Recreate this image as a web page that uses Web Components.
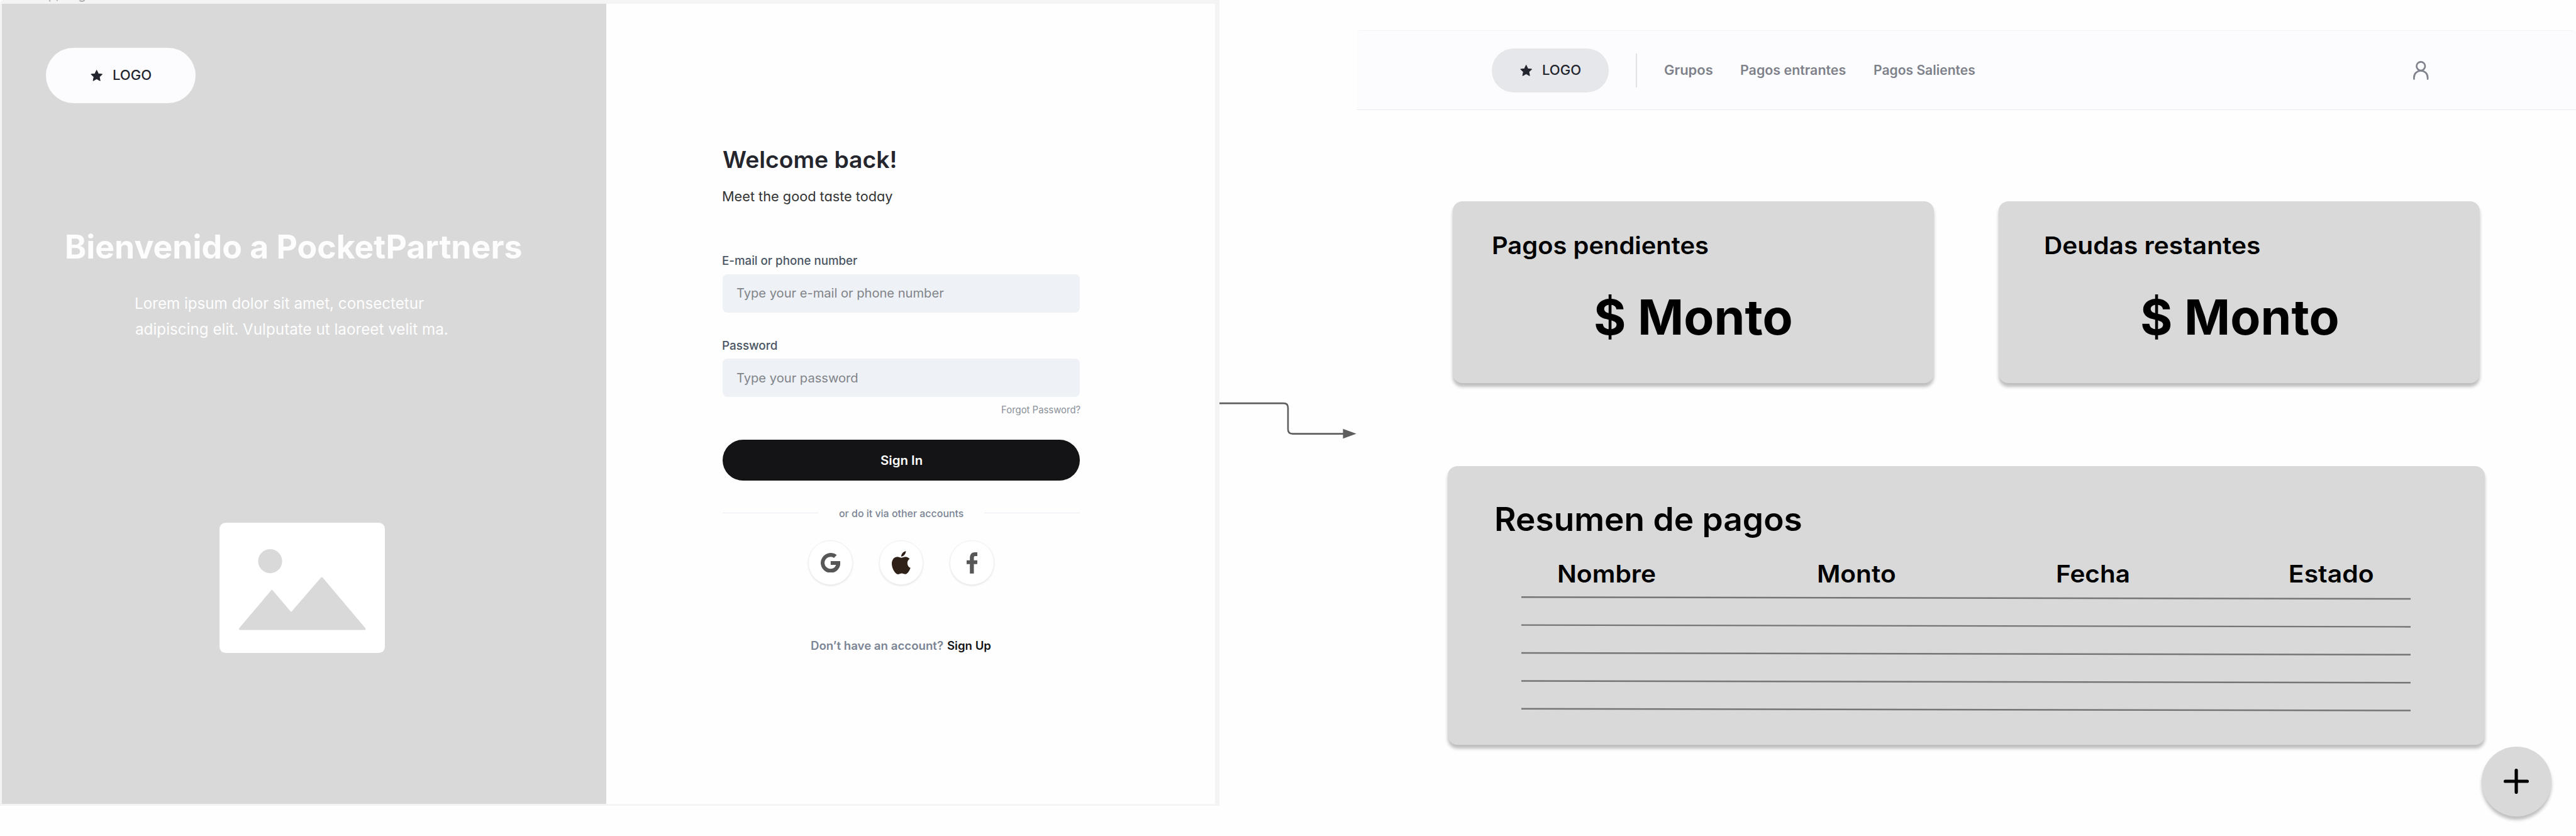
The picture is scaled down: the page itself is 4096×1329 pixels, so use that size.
<!DOCTYPE html>
<html lang="es">
<head>
<meta charset="utf-8">
<title>PocketPartners</title>
<style>
  /* 1rem = 100 design units */
  html { font-size: 64.626px; }
  body { margin: 0; width: 4096px; height: 1329px; overflow: hidden; background: #fefefe; font-family: Inter, "Liberation Sans", sans-serif; }
</style>
</head>
<body>
<pp-board></pp-board>
<script>
const define = (name, html) => {
  const t = document.createElement('template');
  t.innerHTML = html;
  customElements.define(name, class extends HTMLElement {
    constructor() {
      super();
      this.attachShadow({ mode: 'open' }).appendChild(t.content.cloneNode(true));
    }
  });
};

/* Text line whose box runs from cap height to baseline; its ink is fitted to the given width. */
const pen = document.createElement('canvas').getContext('2d');
customElements.define('pp-text', class extends HTMLElement {
  constructor() {
    super();
    this.attachShadow({ mode: 'open' }).innerHTML = `<style>
      :host { display: block; flex: none; line-height: .727; white-space: nowrap; }
      span { display: inline-block; line-height: inherit; vertical-align: top; transform-origin: 0 0; }
      b { display: inline-block; width: 0; height: 0; }
    </style><span><slot></slot><b></b></span>`;
  }
  connectedCallback() {
    const px = 0.64626, size = this.getAttribute('size') * px, w = this.getAttribute('w') * px;
    const weight = this.getAttribute('weight') || 400, text = this.textContent;
    this.style.fontSize = size + 'px';
    this.style.fontWeight = weight;
    this.style.width = w + 'px';
    this.style.height = size * .727 + 'px';
    const span = this.shadowRoot.querySelector('span');
    pen.font = `${weight} ${size}px Inter`;
    const m = pen.measureText(text);
    const left = -m.actualBoundingBoxLeft, right = m.width - m.actualBoundingBoxRight;
    const box = span.getBoundingClientRect();
    const k = w / (box.width - left - right);
    const base = this.shadowRoot.querySelector('b').getBoundingClientRect().bottom - box.top;
    span.style.transform = `translate(${-left * k}px, ${size * .727 - base}px) scaleX(${k})`;
  }
});

define('pp-logo', `<style>
  :host { display: flex; flex: none; align-items: center; justify-content: center; gap: .27rem; box-sizing: border-box;
    width: 3.685rem; height: 1.37rem; border-radius: .69rem; background: #fcfcfe; color: #23252e; }
  :host([small]) { width: 2.88rem; height: 1.09rem; border-radius: .55rem; background: #e6e7ea; }
  svg { width: .3rem; height: .28rem; display: block; }
</style>
<svg viewBox="0 0 30 28"><path fill="currentColor" stroke="currentColor" stroke-width="1.6" stroke-linejoin="round" d="M15 1l4.1 8.6 9.6 1.2-7 6.500 1.800 9.500L15 22.200 6.500 26.800l1.800-9.500-7-6.500 9.600-1.200z"/></svg>
<pp-text size="32.5" w="93" weight="500">LOGO</pp-text>`);

define('pp-picture', `<style>
  :host { display: block; width: 4.07rem; height: 3.2rem; border-radius: .15rem; background: #fff; }
  svg { display: block; width: 100%; height: 100%; }
</style>
<svg viewBox="0 0 407 320"><g fill="#d9d9d9" stroke="#d9d9d9" stroke-linejoin="round">
<circle cx="124.600" cy="94.600" r="29.500" stroke="none"/>
<path stroke-width="6" d="M51 261L129 168.500 176.300 224.500 251.700 137 356.500 261z"/></g></svg>`);

define('pp-brand', `<style>
  :host { display: flex; flex-direction: column; align-items: flex-start; background: #d9d9d9; color: #fdfdfd; }
  pp-logo { margin: 1.08rem 0 0 1.085rem; }
  .title { margin: 3.23rem 0 0 1.59rem; }
  .l1 { margin: .974rem 0 0 3.3rem; }
  .l2 { margin: .354rem 0 0 3.3rem; }
  pp-picture { margin: 4.63rem 0 0 5.35rem; }
</style>
<pp-logo></pp-logo>
<pp-text class="title" size="80" w="1119.500" weight="700">Bienvenido a PocketPartners</pp-text>
<pp-text class="l1" size="38" w="708.500">Lorem ipsum dolor sit amet, consectetur</pp-text>
<pp-text class="l2" size="38" w="767">adipiscing elit. Vulputate ut laoreet velit ma.</pp-text>
<pp-picture></pp-picture>`);

define('pp-field', `<style>
  :host { display: block; color: #4a5564; }
  .box { display: flex; align-items: center; box-sizing: border-box; height: .945rem; margin-top: .23rem; padding-left: .34rem;
    border-radius: .12rem; background: #eef1f6; color: #808489; }
</style>
<slot name="label"></slot><div class="box"><slot></slot></div>`);

define('pp-social', `<style>
  :host { display: flex; align-items: center; justify-content: center; box-sizing: border-box; width: 1.09rem; height: 1.09rem;
    border-radius: 50%; background: #fff; border: .015rem solid #f1f1f5; box-shadow: 0 .02rem .04rem rgba(60,60,90,.13); }
</style><slot></slot>`);

define('pp-login', `<style>
  :host { display: flex; flex-direction: column; align-items: stretch; box-sizing: border-box; background: #fefefe;
    padding: 3.617rem 3.333rem 0 2.868rem; color: #25262d; }
  .meet { margin-top: .6rem; color: #333; font-feature-settings: "cv11"; }
  .f1 { margin-top: 1.343rem; }
  .f2 { margin-top: .695rem; }
  .forgot { margin-top: .222rem; align-self: flex-end; color: #8b9099; }
  .btn { display: flex; align-items: center; justify-content: center; margin-top: .66rem; height: .997rem; border-radius: .5rem;
    background: #141416; color: #fff; }
  .or { display: flex; align-items: center; gap: .51rem; margin-top: .71rem; color: #7b8494; }
  .or i { flex: 1; height: .02rem; background: #e9ecf3; }
  .social { display: flex; justify-content: center; gap: .652rem; margin-top: .588rem; }
  .social svg { display: block; }
  .g { width: .49rem; height: .49rem; } .a { width: .46rem; height: .573rem; } .f { width: .274rem; height: .523rem; }
  .foot { display: flex; justify-content: center; gap: .088rem; margin-top: 1.388rem; color: #7b8494; }
  .foot .up { color: #141416; }
</style>
<pp-text size="56.5" w="425" weight="600">Welcome back!</pp-text>
<pp-text class="meet" size="32.5" w="419">Meet the good taste today</pp-text>
<pp-field class="f1"><pp-text slot="label" size="29.5" w="331" weight="500">E-mail or phone number</pp-text><pp-text size="30.5" w="509.500">Type your e-mail or phone number</pp-text></pp-field>
<pp-field class="f2"><pp-text slot="label" size="29.5" w="134" weight="500">Password</pp-text><pp-text size="30.5" w="298">Type your password</pp-text></pp-field>
<pp-text class="forgot" size="23.5" w="192.500">Forgot Password?</pp-text>
<div class="btn"><pp-text size="31" w="102" weight="600">Sign In</pp-text></div>
<div class="or"><i></i><pp-text size="25" w="306" weight="500">or do it via other accounts</pp-text><i></i></div>
<div class="social">
  <pp-social><svg class="g" viewBox="0 0 49 49"><path fill="#575757" d="M24.500 20H48.600C49.600 35.500 40 49 24.500 49A24.500 24.500 0 1 1 39.500 5.100L32.600 12.200A14.800 14.800 0 1 0 24.500 39.200C31 39.200 35.500 35.500 37.700 29.600H24.500z"/></svg></pp-social>
  <pp-social><svg class="a" viewBox="0 0 46 57.300"><path fill="#2f2118" d="M34.600 0C35.200 6 29.500 13.500 23.300 13.700 22.500 8 28.500 1 34.600 0zM23.500 16.700C26 16.700 29.500 14.200 34 14.200 38 14.200 41.500 16.200 44 19.200 36 23.500 36.500 37.500 46 41.500 43.500 48.500 38.500 57 33.500 57 30.500 57 28.500 55 24.500 55 20.500 55 18.500 57.200 15 57.200 8.500 57.200 0 43 0 31.500 0 20.500 7 14.500 13.500 14.500 17.800 14.500 21 16.700 23.500 16.700z"/></svg></pp-social>
  <pp-social><svg class="f" viewBox="0 0 27.400 52.300"><path fill="#575757" d="M8 52.300V29.200H0V19.600H8V14.200C8 5 12.500 0 20.500 0H27.400V9.200H21.500C18.700 9.200 17.800 10.500 17.800 13V19.600H27.400L26 29.200H17.800V52.300z"/></svg></pp-social>
</div>
<div class="foot"><pp-text size="28.5" w="325" weight="600">Don’t have an account?</pp-text><pp-text class="up" size="28.5" w="107.500" weight="600">Sign Up</pp-text></div>`);

define('pp-arrow', `<style>
  :host { display: block; margin-top: 9.5rem; }
  svg { display: block; width: 3.38rem; height: 1.6rem; }
</style>
<svg viewBox="0 0 338 160"><path fill="none" stroke="#5e5e5e" stroke-width="4" d="M0 42H158Q168.700 42 168.700 53V106Q168.700 117 180 117H305"/><path fill="#5e5e5e" d="M304 105L337 117 304 129z"/></svg>`);

define('pp-nav', `<style>
  :host { display: flex; align-items: center; box-sizing: border-box; height: 1.965rem; padding: 0 3.62rem 0 3.326rem; color: #7e818a;
    background: #fcfcfe; border-top: .03rem solid #f4f4f5; border-bottom: .025rem solid #ebebee; border-radius: .1rem .1rem 0 0; }
  i { width: .025rem; height: .83rem; margin: 0 .675rem 0 .67rem; background: #e1e2e5; }
  nav { display: flex; gap: .698rem; flex: 1; }
  svg { display: block; width: .38rem; height: .464rem; }
</style>
<pp-logo small></pp-logo><i></i>
<nav><pp-text size="32.5" w="118" weight="600">Grupos</pp-text><pp-text size="32.5" w="258" weight="600">Pagos entrantes</pp-text><pp-text size="32.5" w="248" weight="600">Pagos Salientes</pp-text></nav>
<svg viewBox="0 0 38 46.400"><g fill="none" stroke="#80838d" stroke-width="4.200" stroke-linecap="round"><circle cx="19" cy="12.700" r="10.500"/><path d="M2.200 44.200V40.500C2.200 31 9.500 24 19 24S35.800 31 35.800 40.500V44.200"/></g></svg>`);

define('pp-card', `<style>
  :host { display: block; box-sizing: border-box; border-radius: .24rem; background: #d9d9d9; color: #000;
    box-shadow: 0 .08rem .08rem rgba(0,0,0,.25); }
</style><slot></slot>`);

define('pp-amount', `<style>
  :host { display: block; width: 11.84rem; height: 4.48rem; }
  pp-card { height: 100%; padding: .875rem 0 0 var(--in, 1rem); }
  .sum { margin: 1.108rem 0 0 calc(3.52rem - var(--in, 1rem)); }
</style>
<pp-card><slot></slot><pp-text class="sum" size="120" w="481.500" weight="700">$ Monto</pp-text></pp-card>`);

define('pp-summary', `<style>
  :host { display: block; width: 25.524rem; height: 6.86rem; }
  pp-card { display: flex; flex-direction: column; align-items: flex-start; height: 100%; padding: 1rem 0 0 1.194rem; }
  .head { display: flex; margin: .845rem 0 0 1.54rem; }
  .b { margin-left: 3.99rem; } .c { margin-left: 3.988rem; } .d { margin-left: 3.98rem; }
  svg { display: block; width: 21.887rem; height: 2.9rem; margin: .316rem 0 0 .62rem; }
</style>
<pp-card>
  <pp-text size="80" w="751" weight="600">Resumen de pagos</pp-text>
  <div class="head"><pp-text size="59.500" w="239" weight="600">Nombre</pp-text><pp-text class="b" size="59.500" w="189" weight="600">Monto</pp-text><pp-text class="c" size="59.500" w="176" weight="600">Fecha</pp-text><pp-text class="d" size="59.500" w="204.500" weight="600">Estado</pp-text></div>
  <svg viewBox="0 0 2188.700 290"><path stroke="#757575" stroke-width="3.800" d="M0 5L2188.700 9.300M0 73.700L2188.700 78M0 142.400L2188.700 146.700M0 211.100L2188.700 215.400M0 279.800L2188.700 284.100"/></svg>
</pp-card>`);

define('pp-fab', `<style>
  :host { display: flex; align-items: center; justify-content: center; width: 1.73rem; height: 1.72rem; border-radius: 50%;
    background: #d9d9d9; box-shadow: 0 .08rem .08rem rgba(0,0,0,.25); }
  svg { display: block; width: .62rem; height: .62rem; }
</style>
<svg viewBox="0 0 62 62"><path stroke="#000" stroke-width="8" stroke-linecap="round" d="M31 4V58M4 31H58"/></svg>`);

define('pp-dashboard', `<style>
  :host { display: flex; flex-direction: column; position: relative; margin-top: .75rem; }
  .cards { display: flex; gap: 1.6rem; margin: 2.235rem 0 0 2.362rem; }
  pp-summary { margin: 2.035rem 0 0 2.238rem; }
  pp-fab { position: absolute; right: .595rem; top: 17.615rem; }
</style>
<pp-nav></pp-nav>
<div class="cards">
  <pp-amount style="--in:.99rem"><pp-text size="59.500" w="529" weight="600">Pagos pendientes</pp-text></pp-amount>
  <pp-amount style="--in:1.137rem"><pp-text size="59.500" w="528" weight="600">Deudas restantes</pp-text></pp-amount>
</div>
<pp-summary></pp-summary>
<pp-fab></pp-fab>`);

define('pp-board', `<style>
  :host { display: grid; grid-template-columns: 30rem 3.378rem 30rem; height: 20.57rem; overflow: hidden; }
  .frame { display: grid; grid-template-columns: 14.87rem 1fr; box-sizing: border-box; height: 19.82rem; padding: .09rem .1rem .045rem .045rem;
    background: #f4f4f4; border-radius: .1rem 0 0 0; position: relative; }
  .marks { position: absolute; left: 1.15rem; top: 0; width: 1rem; height: .06rem; }
</style>
<div class="frame"><pp-brand></pp-brand><pp-login></pp-login>
<svg class="marks" viewBox="0 0 100 6"><path fill="none" stroke="#b0b0b0" stroke-width="3" d="M8 0V4M27 0L25 2M81 1Q88 6 94 0"/></svg></div>
<pp-arrow></pp-arrow>
<pp-dashboard></pp-dashboard>`);
</script>
</body>
</html>
